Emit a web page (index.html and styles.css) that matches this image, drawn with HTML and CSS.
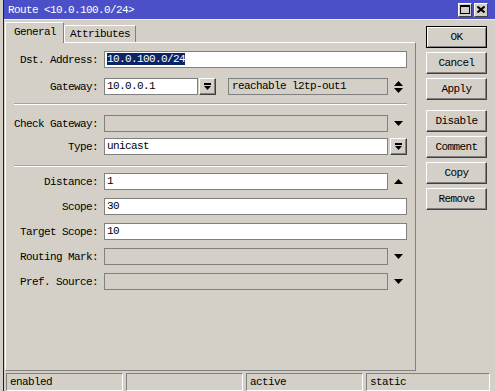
FILE: index.html
```html
<!doctype html>
<html lang="en">
<head>
    <meta charset="utf-8" />
    <title>Route &lt;10.0.100.0/24&gt;</title>
    <link rel="stylesheet" href="styles.css">
</head>
<body>
<div class="win">
    <div class="titlebar">
        <span class="title">Route &lt;10.0.100.0/24&gt;</span>
        <span class="tbtns">
            <span class="tbtn"><svg width="10" height="9" viewBox="0 0 10 9"><rect x="0.5" y="0.5" width="9" height="8" fill="none" stroke="#000"/><rect x="0" y="0" width="10" height="2" fill="#000"/></svg></span>
            <span class="tbtn"><svg width="8" height="7" viewBox="0 0 8 7"><path d="M0.5 0.5L7.5 6.5M7.5 0.5L0.5 6.5" stroke="#000" stroke-width="2"/></svg></span>
        </span>
    </div>

    <div class="main">
        <div class="left">
            <div class="tabs">
                <span class="tab active">General</span>
                <span class="tab">Attributes</span>
            </div>
            <div class="panel">
                <div class="group g1">
                    <div class="row">
                        <label class="lbl">Dst. Address:</label>
                        <div class="field full"><span class="sel">10.0.100.0/24</span></div>
                    </div>
                    <div class="row">
                        <label class="lbl">Gateway:</label>
                        <div class="field gw">10.0.0.1</div>
                        <span class="ddbtn"><svg width="7" height="8" viewBox="0 0 7 8"><rect x="0" y="0" width="7" height="2"/><polygon points="0,3 7,3 3.5,7"/></svg></span>
                        <div class="field off gwstat">reachable l2tp-out1</div>
                        <span class="arrow"><svg width="9" height="12" viewBox="0 0 9 12"><polygon points="0,5 9,5 4.5,0"/><polygon points="0,7 9,7 4.5,12"/></svg></span>
                    </div>
                </div>
                <div class="sep s1"></div>
                <div class="group g2">
                    <div class="row">
                        <label class="lbl">Check Gateway:</label>
                        <div class="field off short"></div>
                        <span class="arrow"><svg width="9" height="5" viewBox="0 0 9 5"><polygon points="0,0 9,0 4.5,5"/></svg></span>
                    </div>
                    <div class="row">
                        <label class="lbl">Type:</label>
                        <div class="field short">unicast</div>
                        <span class="ddbtn type"><svg width="7" height="8" viewBox="0 0 7 8"><rect x="0" y="0" width="7" height="2"/><polygon points="0,3 7,3 3.5,7"/></svg></span>
                    </div>
                </div>
                <div class="sep s2"></div>
                <div class="group g3">
                    <div class="row">
                        <label class="lbl">Distance:</label>
                        <div class="field short">1</div>
                        <span class="arrow"><svg width="9" height="5" viewBox="0 0 9 5"><polygon points="0,5 9,5 4.5,0"/></svg></span>
                    </div>
                    <div class="row">
                        <label class="lbl">Scope:</label>
                        <div class="field full">30</div>
                    </div>
                    <div class="row">
                        <label class="lbl">Target Scope:</label>
                        <div class="field full">10</div>
                    </div>
                    <div class="row">
                        <label class="lbl">Routing Mark:</label>
                        <div class="field off short"></div>
                        <span class="arrow"><svg width="9" height="5" viewBox="0 0 9 5"><polygon points="0,0 9,0 4.5,5"/></svg></span>
                    </div>
                    <div class="row">
                        <label class="lbl">Pref. Source:</label>
                        <div class="field off short"></div>
                        <span class="arrow"><svg width="9" height="5" viewBox="0 0 9 5"><polygon points="0,0 9,0 4.5,5"/></svg></span>
                    </div>
                </div>
            </div>
        </div>

        <div class="actions">
            <button class="btn default">OK</button>
            <button class="btn">Cancel</button>
            <button class="btn">Apply</button>
            <button class="btn gap">Disable</button>
            <button class="btn">Comment</button>
            <button class="btn">Copy</button>
            <button class="btn">Remove</button>
        </div>
    </div>

    <div class="status">
        <span class="cell">enabled</span>
        <span class="cell"></span>
        <span class="cell">active</span>
        <span class="cell last">static</span>
    </div>
</div>
</body>
</html>
```

FILE: styles.css
```css
body { margin:0; background:#d4d0c8; overflow:hidden; }
.win { margin-left:3px; border-left:1px solid #202020; height:391px; background:#d4d0c8;
    font:11px "Liberation Mono", monospace; letter-spacing:-0.6px; color:#000; }

.titlebar { height:19px; border-bottom:1px solid #f0f0f0; background:#4b50c8; color:#fff;
    display:flex; align-items:center; justify-content:space-between; padding:0 7px 0 4px; }
.title { font-size:11px; }
.tbtns { display:flex; gap:2px; }
.tbtn { width:14px; height:14px; box-sizing:border-box; background:#d4d0c8;
    border:1px solid; border-color:#fff #404040 #404040 #fff;
    display:flex; align-items:center; justify-content:center; }

.main { display:flex; height:352px; }
.left { padding:2px 0 0 1px; width:411px; }
.tabs { display:flex; align-items:flex-end; height:20px; }
.tab { height:17px; box-sizing:border-box; padding:2px 5px 0; border:1px solid; border-bottom:none;
    border-color:#fff #808080 #808080 #fff; }
.tab.active { height:21px; padding:3px 7px 0 8px; margin-bottom:-1px; background:#d4d0c8; position:relative; z-index:1; }
.panel { height:329px; box-sizing:border-box; border:1px solid; border-color:#fff #808080 #808080 #fff; }

.group { display:flex; flex-direction:column; }
.g1 { padding-top:8px; gap:10px; }
.g2 { gap:6px; }
.g3 { gap:8px; }
.sep { margin-left:8px; width:393px; border-top:1px solid #a8a49c; border-bottom:1px solid #fff; }
.s1 { margin-top:8px; margin-bottom:10px; }
.s2 { margin-top:10px; margin-bottom:6px; }

.row { display:flex; align-items:center; height:17px; }
.lbl { width:92px; margin-right:6px; text-align:right; white-space:nowrap; }
.field { height:17px; box-sizing:border-box; border:1px solid #808080; background:#fff;
    padding:0 2px; line-height:15px; white-space:nowrap; overflow:hidden; }
.field.off { background:#d4d0c8; }
.full { width:303px; }
.short { width:284px; }
.gw { width:94px; }
.gwstat { width:160px; margin-left:12px; padding-left:3px; }
.sel { background:#0a246a; color:#fff; }

.ddbtn { width:17px; height:17px; box-sizing:border-box; margin-left:1px; background:#d4d0c8;
    border:1px solid; border-color:#fff #404040 #404040 #fff; box-shadow:inset -1px -1px #808080;
    display:flex; align-items:center; justify-content:center; }
.ddbtn.type { margin-left:2px; }
.arrow { width:19px; display:flex; justify-content:center; align-items:center; padding-left:1px; }

.actions { display:flex; flex-direction:column; gap:4px; margin-left:10px; padding-top:6px; width:61px; }
.btn { height:22px; margin:0; padding:0; background:#d4d0c8; font:inherit; letter-spacing:inherit; color:#000;
    border:1px solid; border-color:#fff #404040 #404040 #fff; box-shadow:inset -1px -1px #808080; }
.btn.default { border-color:#000; box-shadow:inset 1px 1px #fff, inset -1px -1px #808080; }
.btn.gap { margin-top:6px; }

.status { display:flex; gap:3px; margin-top:1px; padding-left:2px; }
.cell { width:117px; height:18px; box-sizing:border-box; padding:2px 0 0 3px;
    border:1px solid; border-color:#808080 #fff #fff #808080; }
.cell.last { width:124px; }
```
